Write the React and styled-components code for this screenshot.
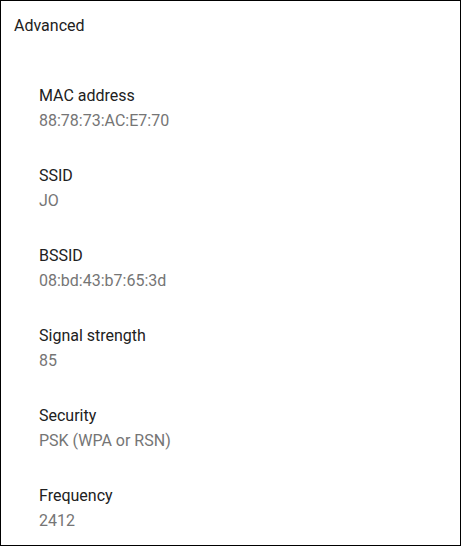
import React from "react";
import styled, { createGlobalStyle } from "styled-components";

const Global = createGlobalStyle`
  html, body { margin: 0; padding: 0; background: #fff; }
  body { font-family: Roboto, "Noto Sans", sans-serif; }
`;

const Panel = styled.div`
  box-sizing: border-box;
  width: 461px;
  height: 546px;
  border: 1px solid #000;
  display: flex;
  flex-direction: column;
  overflow: hidden;
`;

const Header = styled.div`
  padding: 15px 0 0 13px;
  font-size: 16px;
  line-height: 20px;
  color: #212121;
`;

const List = styled.div`
  display: flex;
  flex-direction: column;
  padding-top: 30px;
`;

const Item = styled.div`
  height: 80px;
  box-sizing: border-box;
  padding: 20px 0 0 38px;
  display: flex;
  flex-direction: column;
  gap: 5px;
`;

const Label = styled.div`
  font-size: 16px;
  line-height: 20px;
  color: #212121;
`;

const Value = styled.div`
  font-size: 16px;
  line-height: 20px;
  color: #757575;
`;

const items = [
  ["MAC address", "88:78:73:AC:E7:70"],
  ["SSID", "JO"],
  ["BSSID", "08:bd:43:b7:65:3d"],
  ["Signal strength", "85"],
  ["Security", "PSK (WPA or RSN)"],
  ["Frequency", "2412"],
];

export default function App() {
  return (
    <>
      <Global />
      <Panel>
        <Header>Advanced</Header>
        <List>
          {items.map(([l, v]) => (
            <Item key={l}>
              <Label>{l}</Label>
              <Value>{v}</Value>
            </Item>
          ))}
        </List>
      </Panel>
    </>
  );
}
